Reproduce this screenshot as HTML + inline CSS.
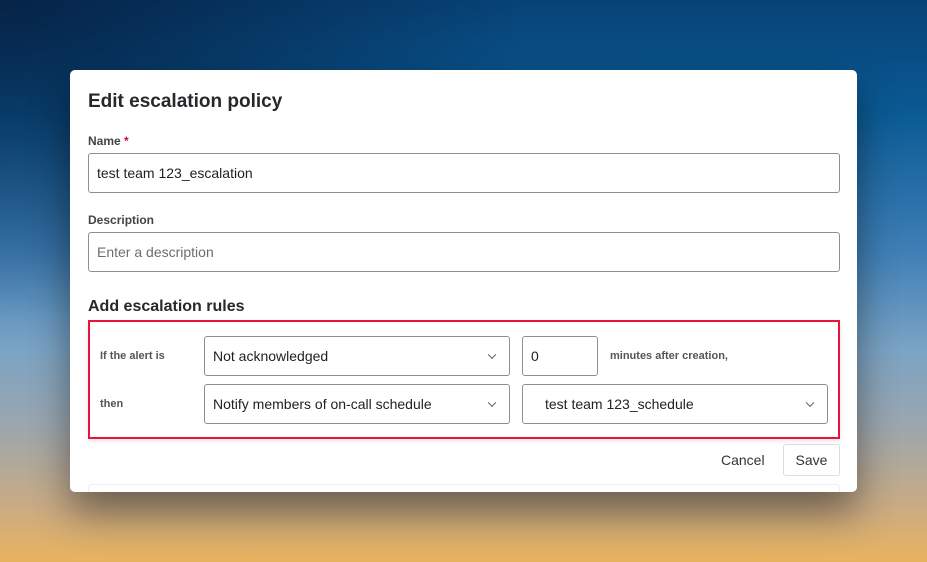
<!DOCTYPE html>
<html><head><style>
*{box-sizing:border-box;margin:0;padding:0}
body{width:927px;height:562px;overflow:hidden;position:relative;font-family:"Liberation Sans",sans-serif;
background:linear-gradient(180deg,#074276 0%,#0a5a94 20%,#3f7fb6 45%,#7aa3c4 62%,#9aa6b0 75%,#c9ab85 90%,#e9b35e 100%);}
.tl{position:absolute;inset:0;background:radial-gradient(ellipse at 0% 0%,rgba(5,25,55,.75),rgba(5,25,55,0) 40%)}
.modal{position:absolute;left:70px;top:70px;width:787px;height:422px;background:#fff;border-radius:5px;box-shadow:0 20px 40px rgba(0,0,0,.45);overflow:hidden;color:#222}
.a{position:absolute}
h1{position:absolute;left:18px;top:21px;font-size:19px;font-weight:bold;color:#26282c}
.lbl{font-size:12px;font-weight:bold;color:#444}
.in{position:absolute;border:1px solid #8e9096;border-radius:3px;background:#fff;font-size:14px;color:#1f1f1f;padding-left:8px;display:flex;align-items:center}
.chev{position:absolute;right:14px;top:50%;width:6px;height:6px;border-right:1.2px solid #555;border-bottom:1.2px solid #555;transform:translateY(-70%) rotate(45deg)}
.sm{font-size:11px;font-weight:bold;color:#555}
</style></head><body>
<div class="tl"></div>
<div class="modal">
<h1>Edit escalation policy</h1>
<div class="a lbl" style="left:18px;top:64px">Name<span style="color:#c8102e"> *</span></div>
<div class="in" style="left:18px;top:83px;width:752px;height:40px">test team 123_escalation</div>
<div class="a lbl" style="left:18px;top:143px">Description</div>
<div class="in" style="left:18px;top:162px;width:752px;height:40px;color:#6b6d72">Enter a description</div>
<div class="a" style="left:18px;top:228px;font-size:16px;font-weight:bold;color:#26282c">Add escalation rules</div>
<div class="a" style="left:18px;top:250px;width:752px;height:119px;border:2px solid #e8133a;box-shadow:0 2px 4px rgba(0,0,0,.1)"></div>
<div class="a sm" style="left:30px;top:280px">If the alert is</div>
<div class="in" style="left:134px;top:266px;width:306px;height:40px">Not acknowledged<span class="chev"></span></div>
<div class="in" style="left:452px;top:266px;width:76px;height:40px">0</div>
<div class="a sm" style="left:540px;top:280px">minutes after creation,</div>
<div class="a sm" style="left:30px;top:328px">then</div>
<div class="in" style="left:134px;top:314px;width:306px;height:40px">Notify members of on-call schedule<span class="chev"></span></div>
<div class="in" style="left:452px;top:314px;width:306px;height:40px;padding-left:22px">test team 123_schedule<span class="chev"></span></div>
<div class="a" style="left:651px;top:382px;font-size:14px;color:#333">Cancel</div>
<div class="a" style="left:713px;top:374px;width:57px;height:32px;border:1px solid #ddd;border-radius:3px;font-size:14px;color:#333;display:flex;align-items:center;justify-content:center">Save</div>
<div class="a" style="left:18px;top:414px;width:752px;height:20px;border:1px solid #eee;border-radius:4px"></div>
</div>
</body></html>
